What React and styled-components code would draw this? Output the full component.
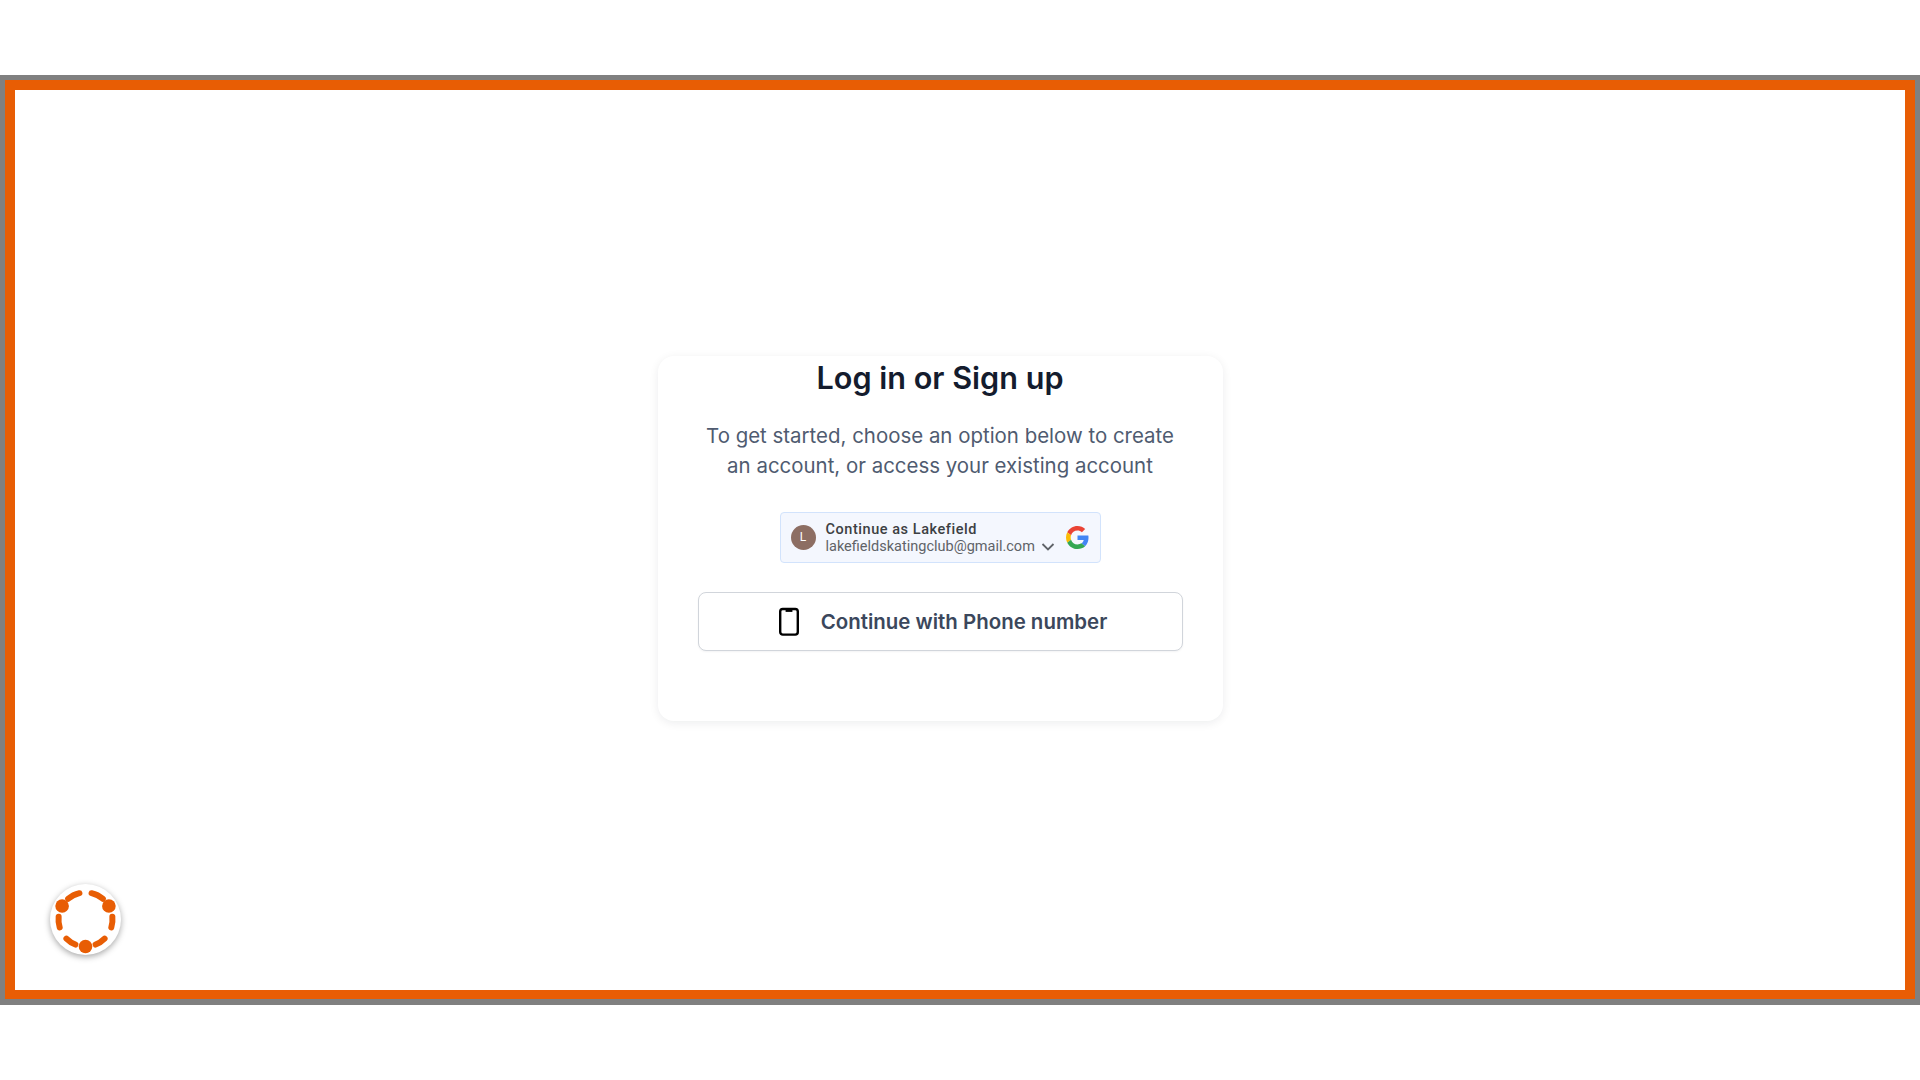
import React from "react";
import styled, { createGlobalStyle } from "styled-components";

const Global = createGlobalStyle`
  html, body { margin: 0; padding: 0; background: #fff; }
  * { box-sizing: border-box; }
  #root { width: 1920px; height: 1080px; overflow: hidden; font-family: Inter, "Liberation Sans", sans-serif; }
`;

const Page = styled.div`
  width: 1920px;
  height: 1080px;
  padding: 75px 0;
  background: #fff;
`;
const GrayFrame = styled.div`
  height: 930px;
  padding: 5px 5px 6px;
  background: #808080;
`;
const OrangeFrame = styled.main`
  position: relative;
  height: 100%;
  border: 10px solid #e85d04;
  border-bottom-width: 9px;
  background: #fff;
  display: flex;
  align-items: center;
  justify-content: center;
  padding: 0 40px 4px 0;
`;
const Card = styled.section`
  width: 565px;
  height: 365px;
  border-radius: 16px;
  background: #fff;
  box-shadow: 0 2px 10px rgba(15, 23, 42, 0.08);
  display: flex;
  flex-direction: column;
  align-items: center;
`;
const Title = styled.h1`
  margin: 0;
  padding-top: 1px;
  font-size: 30.6px;
  line-height: 42px;
  font-weight: 600;
  color: #141c2e;
  text-align: center;
`;
const Description = styled.p`
  margin: 22px 0 0;
  font-size: 20.45px;
  line-height: 30px;
  color: #4f5b70;
  text-align: center;
`;
const GoogleButton = styled.div`
  margin-top: 31px;
  width: 321px;
  height: 51px;
  border: 1px solid #d2e3fc;
  border-radius: 4px;
  background: #f4f7fe;
  display: flex;
  align-items: center;
  padding: 0 11px 0 10px;
  font-family: Roboto, "Liberation Sans", sans-serif;
`;
const Avatar = styled.div`
  width: 25px;
  height: 25px;
  border-radius: 50%;
  background: #8d6e63;
  color: #fff;
  font-size: 12px;
  display: flex;
  align-items: center;
  justify-content: center;
  flex: none;
`;
const Account = styled.div`
  margin-left: 10px;
  padding-top: 2px;
  display: flex;
  flex-direction: column;
`;
const AccountName = styled.span`
  font-size: 14.5px;
  line-height: 17px;
  font-weight: 500;
  letter-spacing: 0.55px;
  color: #3c4043;
  white-space: nowrap;
`;
const AccountMail = styled.span`
  font-size: 14.5px;
  line-height: 17px;
  color: #5f6368;
  white-space: nowrap;
`;
const Chevron = styled.svg`
  width: 14px;
  height: 14px;
  margin: 19px 0 0 6px;
  flex: none;
`;
const GoogleLogo = styled.svg`
  width: 23px;
  height: 23px;
  margin-left: auto;
  flex: none;
`;
const PhoneButton = styled.button`
  margin-top: 29px;
  width: 485px;
  height: 59px;
  border: 1px solid #d1d5db;
  border-radius: 8px;
  background: #fff;
  box-shadow: 0 1px 2px rgba(15, 23, 42, 0.05);
  display: flex;
  align-items: center;
  justify-content: center;
  gap: 20px;
  padding: 0;
  font-family: Inter, "Liberation Sans", sans-serif;
  font-size: 20.45px;
  font-weight: 600;
  color: #3b475c;
`;
const PhoneIcon = styled.svg`
  width: 28px;
  height: 30px;
  flex: none;
`;
const Launcher = styled.button`
  position: absolute;
  left: 35px;
  bottom: 35px;
  width: 71px;
  height: 71px;
  padding: 0;
  border: none;
  border-radius: 50%;
  background: #fff;
  box-shadow: 0 2px 6px rgba(0, 0, 0, 0.35);
  display: flex;
  align-items: center;
  justify-content: center;
`;
const LauncherIcon = styled.svg`
  width: 71px;
  height: 71px;
`;

const polar = (deg, r = 27) => {
  const a = (deg * Math.PI) / 180;
  return [35.5 + r * Math.sin(a), 35.5 - r * Math.cos(a)];
};
const arc = (from, to) => {
  const [x1, y1] = polar(from);
  const [x2, y2] = polar(to);
  return `M${x1.toFixed(2)} ${y1.toFixed(2)}A27 27 0 0 1 ${x2.toFixed(2)} ${y2.toFixed(2)}`;
};

const Dots = [60, 180, 300];
const Arcs = [[13, 40], [84, 107], [135, 158], [202, 225], [253, 276], [320, 347]];

export default function App() {
  return (
    <Page>
      <Global />
      <GrayFrame>
        <OrangeFrame>
          <Card>
            <Title>Log in or Sign up</Title>
            <Description>
              To get started, choose an option below to create
              <br />
              an account, or access your existing account
            </Description>
            <GoogleButton>
              <Avatar>L</Avatar>
              <Account>
                <AccountName>Continue as Lakefield</AccountName>
                <AccountMail>lakefieldskatingclub@gmail.com</AccountMail>
              </Account>
              <Chevron viewBox="0 0 14 14" fill="none">
                <path d="M1.5 4 7 9.5 12.5 4" stroke="#5f6368" strokeWidth="1.8" />
              </Chevron>
              <GoogleLogo viewBox="0 0 48 48">
                <path fill="#EA4335" d="M24 9.5c3.54 0 6.71 1.22 9.21 3.6l6.85-6.85C35.9 2.38 30.47 0 24 0 14.62 0 6.51 5.38 2.56 13.22l7.98 6.19C12.43 13.72 17.74 9.5 24 9.5z" />
                <path fill="#4285F4" d="M46.98 24.55c0-1.57-.15-3.09-.38-4.55H24v9.02h12.94c-.58 2.96-2.26 5.48-4.78 7.18l7.73 6c4.51-4.18 7.09-10.36 7.09-17.65z" />
                <path fill="#FBBC05" d="M10.53 28.59c-.48-1.45-.76-2.99-.76-4.59s.27-3.14.76-4.59l-7.98-6.19C.92 16.46 0 20.12 0 24c0 3.88.92 7.54 2.56 10.78l7.97-6.19z" />
                <path fill="#34A853" d="M24 48c6.48 0 11.93-2.13 15.89-5.81l-7.73-6c-2.15 1.45-4.92 2.3-8.16 2.3-6.26 0-11.57-4.22-13.47-9.91l-7.98 6.19C6.51 42.62 14.62 48 24 48z" />
              </GoogleLogo>
            </GoogleButton>
            <PhoneButton>
              <PhoneIcon viewBox="0 0 28 30" fill="none" stroke="#000" strokeWidth="2.4">
                <rect x="7.2" y="3" width="17.6" height="25.6" rx="2.6" />
                <path d="M12.6 4.4h6.8" strokeWidth="3" />
              </PhoneIcon>
              Continue with Phone number
            </PhoneButton>
          </Card>
          <Launcher aria-label="Menu">
            <LauncherIcon viewBox="0 0 71 71" fill="none">
              {Arcs.map(([a, b]) => (
                <path key={a} d={arc(a, b)} stroke="#e85d04" strokeWidth="6" strokeLinecap="round" />
              ))}
              {Dots.map((d) => {
                const [cx, cy] = polar(d);
                return <circle key={d} cx={cx} cy={cy} r="6.8" fill="#e85d04" />;
              })}
            </LauncherIcon>
          </Launcher>
        </OrangeFrame>
      </GrayFrame>
    </Page>
  );
}
